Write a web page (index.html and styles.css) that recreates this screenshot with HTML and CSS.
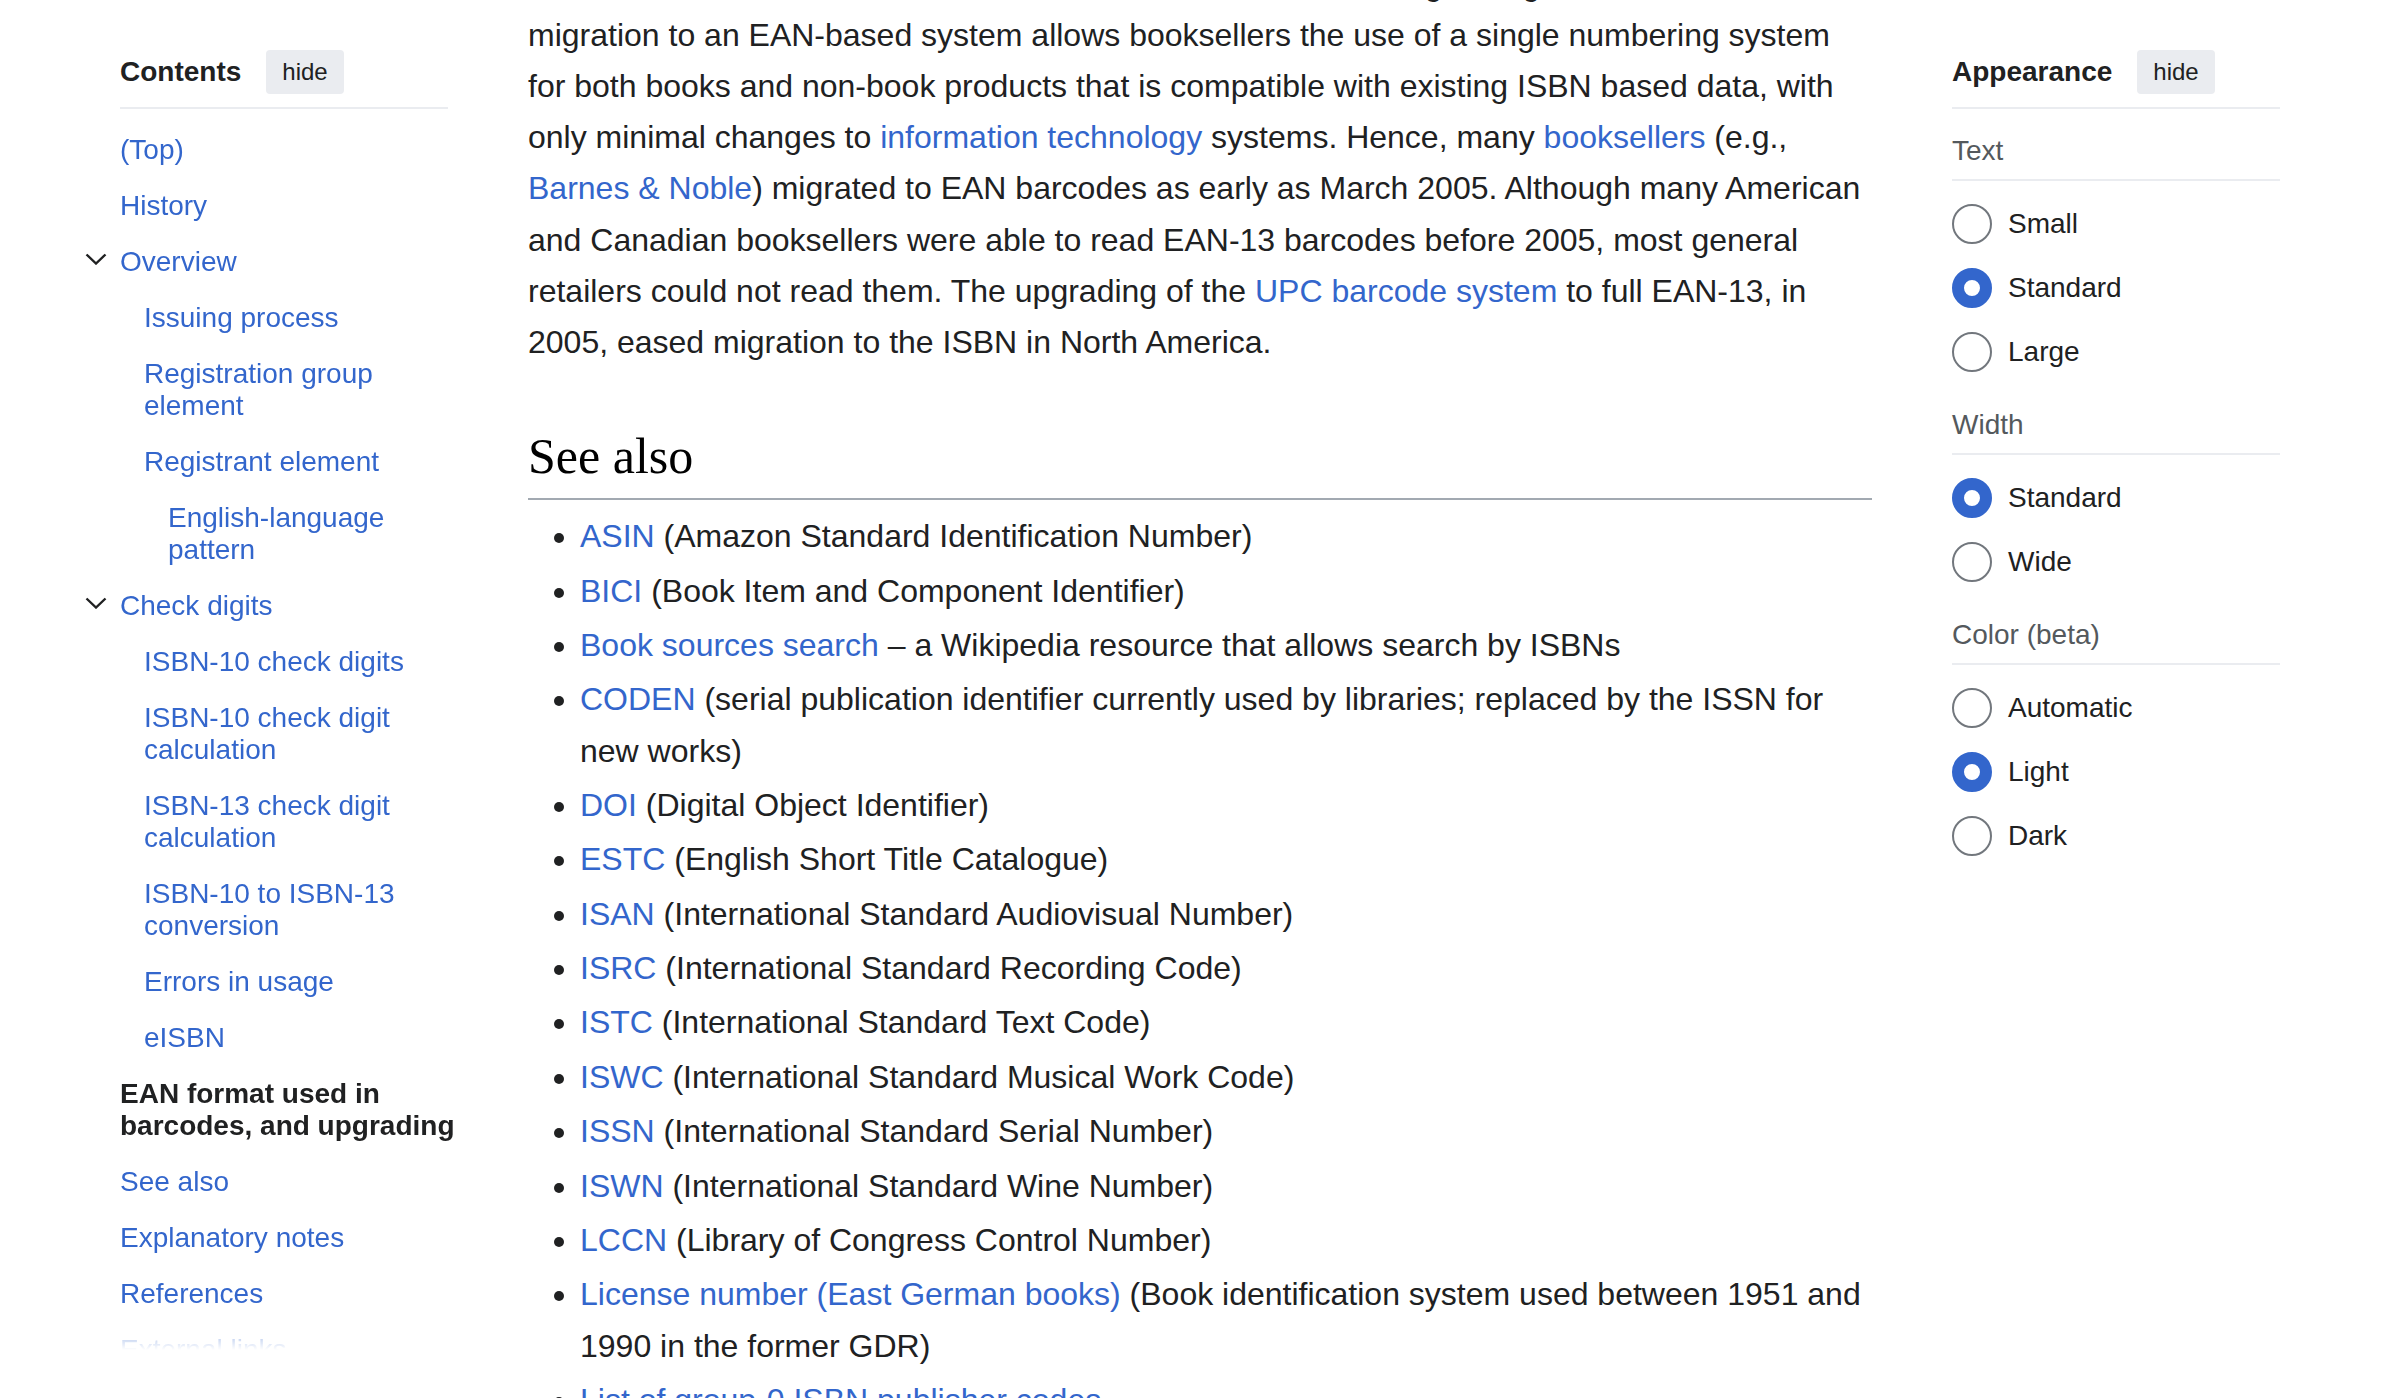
FILE: index.html
```html
<!DOCTYPE html>
<html lang="en">
<head>
<meta charset="utf-8">
<title>International Standard Book Number</title>
<link rel="stylesheet" href="styles.css">
</head>
<body>
<div class="page">
  <nav class="toc" aria-label="Contents">
    <div class="pinned-header">
      <h2 class="pinned-title">Contents</h2>
      <button class="hide-btn" type="button">hide</button>
    </div>
    <ul class="toc-list">
      <li class="toc-item"><a class="toc-link" href="#">(Top)</a></li>
      <li class="toc-item"><a class="toc-link" href="#History">History</a></li>
      <li class="toc-item">
        <div class="toc-row">
          <button class="toc-toggle" type="button" aria-label="Toggle Overview subsection">
            <svg class="chevron" width="22" height="12" viewBox="0 0 22 12"><polyline points="1.5,1.5 11,10.5 20.5,1.5" fill="none" stroke="#202122" stroke-width="2.4"/></svg>
          </button>
          <a class="toc-link" href="#Overview">Overview</a>
        </div>
        <ul class="toc-sub">
          <li><a class="toc-link" href="#Issuing_process">Issuing process</a></li>
          <li><a class="toc-link" href="#Registration_group_element">Registration group element</a></li>
          <li>
            <a class="toc-link" href="#Registrant_element">Registrant element</a>
            <ul class="toc-sub">
              <li><a class="toc-link" href="#English-language_pattern">English-language pattern</a></li>
            </ul>
          </li>
        </ul>
      </li>
      <li class="toc-item">
        <div class="toc-row">
          <button class="toc-toggle" type="button" aria-label="Toggle Check digits subsection">
            <svg class="chevron" width="22" height="12" viewBox="0 0 22 12"><polyline points="1.5,1.5 11,10.5 20.5,1.5" fill="none" stroke="#202122" stroke-width="2.4"/></svg>
          </button>
          <a class="toc-link" href="#Check_digits">Check digits</a>
        </div>
        <ul class="toc-sub">
          <li><a class="toc-link" href="#ISBN-10_check_digits">ISBN-10 check digits</a></li>
          <li><a class="toc-link" href="#ISBN-10_check_digit_calculation">ISBN-10 check digit calculation</a></li>
          <li><a class="toc-link" href="#ISBN-13_check_digit_calculation">ISBN-13 check digit calculation</a></li>
          <li><a class="toc-link" href="#ISBN-10_to_ISBN-13_conversion">ISBN-10 to ISBN-13 conversion</a></li>
          <li><a class="toc-link" href="#Errors_in_usage">Errors in usage</a></li>
          <li><a class="toc-link" href="#eISBN">eISBN</a></li>
        </ul>
      </li>
      <li class="toc-item"><a class="toc-link is-active" href="#EAN_format">EAN format used in barcodes, and upgrading</a></li>
      <li class="toc-item"><a class="toc-link" href="#See_also">See also</a></li>
      <li class="toc-item"><a class="toc-link" href="#Explanatory_notes">Explanatory notes</a></li>
      <li class="toc-item"><a class="toc-link" href="#References">References</a></li>
      <li class="toc-item"><a class="toc-link" href="#External_links">External links</a></li>
    </ul>
  </nav>

  <main class="content">
    <p class="body-text">barcode format is identical to the EAN barcode format of existing 10-digit ISBNs. So,<br>migration to an EAN-based system allows booksellers the use of a single numbering system for both books and non-book products that is compatible with existing ISBN based data, with only minimal changes to <a href="#">information technology</a> systems. Hence, many <a href="#">booksellers</a> (e.g., <a href="#">Barnes &amp; Noble</a>) migrated to EAN barcodes as early as March 2005. Although many American and Canadian booksellers were able to read EAN-13 barcodes before 2005, most general retailers could not read them. The upgrading of the <a href="#">UPC barcode system</a> to full EAN-13, in 2005, eased migration to the ISBN in North America.</p>

    <h2 class="section-heading" id="See_also">See also</h2>
    <ul class="see-also">
      <li><a href="#">ASIN</a> (Amazon Standard Identification Number)</li>
      <li><a href="#">BICI</a> (Book Item and Component Identifier)</li>
      <li><a href="#">Book sources search</a> – a Wikipedia resource that allows search by ISBNs</li>
      <li><a href="#">CODEN</a> (serial publication identifier currently used by libraries; replaced by the ISSN for new works)</li>
      <li><a href="#">DOI</a> (Digital Object Identifier)</li>
      <li><a href="#">ESTC</a> (English Short Title Catalogue)</li>
      <li><a href="#">ISAN</a> (International Standard Audiovisual Number)</li>
      <li><a href="#">ISRC</a> (International Standard Recording Code)</li>
      <li><a href="#">ISTC</a> (International Standard Text Code)</li>
      <li><a href="#">ISWC</a> (International Standard Musical Work Code)</li>
      <li><a href="#">ISSN</a> (International Standard Serial Number)</li>
      <li><a href="#">ISWN</a> (International Standard Wine Number)</li>
      <li><a href="#">LCCN</a> (Library of Congress Control Number)</li>
      <li><a href="#">License number (East German books)</a> (Book identification system used between 1951 and 1990 in the former GDR)</li>
      <li><a href="#">List of group-0 ISBN publisher codes</a></li>
      <li><a href="#">List of group-1 ISBN publisher codes</a></li>
    </ul>
  </main>

  <aside class="appearance" aria-label="Appearance">
    <div class="pinned-header">
      <h2 class="pinned-title">Appearance</h2>
      <button class="hide-btn" type="button">hide</button>
    </div>

    <div class="appearance-section first">
      <div class="section-label">Text</div>
      <div class="radio-group" role="radiogroup">
        <label class="radio-option"><input class="radio" type="radio" name="text-size"> Small</label>
        <label class="radio-option"><input class="radio" type="radio" name="text-size" checked> Standard</label>
        <label class="radio-option"><input class="radio" type="radio" name="text-size"> Large</label>
      </div>
    </div>

    <div class="appearance-section">
      <div class="section-label">Width</div>
      <div class="radio-group" role="radiogroup">
        <label class="radio-option"><input class="radio" type="radio" name="width" checked> Standard</label>
        <label class="radio-option"><input class="radio" type="radio" name="width"> Wide</label>
      </div>
    </div>

    <div class="appearance-section">
      <div class="section-label">Color (beta)</div>
      <div class="radio-group" role="radiogroup">
        <label class="radio-option"><input class="radio" type="radio" name="color"> Automatic</label>
        <label class="radio-option"><input class="radio" type="radio" name="color" checked> Light</label>
        <label class="radio-option"><input class="radio" type="radio" name="color"> Dark</label>
      </div>
    </div>
  </aside>
</div>
</body>
</html>
```

FILE: styles.css
```css
html {
  overflow: hidden;
}

body {
  margin: 0;
  background: #ffffff;
  color: #202122;
  font-family: "Liberation Sans", Arial, Helvetica, sans-serif;
}

a {
  color: #3366cc;
  text-decoration: none;
}

.page {
  display: grid;
  grid-template-columns: 328px 1344px 328px;
  column-gap: 80px;
  padding: 0 120px;
  align-items: start;
}

/* ---------- pinned headers ---------- */
.pinned-header {
  display: flex;
  align-items: center;
  gap: 25px;
  padding-bottom: 13px;
  border-bottom: 2px solid #eaecf0;
}

.pinned-title {
  margin: 0;
  font-size: 28px;
  line-height: 32px;
  font-weight: bold;
  color: #202122;
}

.hide-btn {
  height: 44px;
  padding: 0 16px;
  border: 0;
  border-radius: 4px;
  background: #eaecf0;
  color: #202122;
  font-family: "Liberation Sans", Arial, sans-serif;
  font-size: 24px;
  line-height: 28px;
}

/* ---------- table of contents ---------- */
.toc {
  padding-top: 50px;
  height: 1350px;
  box-sizing: border-box;
  display: flex;
  flex-direction: column;
}

.toc-list {
  flex: 1;
  min-height: 0;
  overflow: hidden;
  list-style: none;
  margin: 13px -20px 0 -40px;
  padding: 0 0 0 40px;
  -webkit-mask-image: linear-gradient(to bottom, #000 calc(100% - 44px), transparent 100%);
  mask-image: linear-gradient(to bottom, #000 calc(100% - 44px), transparent 100%);
}

.toc-sub {
  list-style: none;
  margin: 0;
  padding: 0 0 0 24px;
}

.toc-link {
  display: block;
  padding: 12px 0;
  font-size: 28px;
  line-height: 32px;
  color: #3366cc;
}

.toc-link.is-active {
  color: #202122;
  font-weight: bold;
}

.toc-row {
  display: flex;
  align-items: flex-start;
}

.toc-row .toc-link {
  flex: 1;
}

.toc-toggle {
  flex: none;
  display: flex;
  align-items: center;
  justify-content: center;
  width: 22px;
  height: 32px;
  box-sizing: border-box;
  margin: 12px 13px 0 -35px;
  padding: 0 0 6px;
  border: 0;
  background: none;
}

.chevron {
  display: block;
}

/* ---------- main content ---------- */
.content {
  min-width: 0;
  margin-top: -41.5px;
}

.body-text {
  margin: 0;
  font-size: 32px;
  line-height: 51.2px;
}

.section-heading {
  margin: 55.5px 0 0;
  padding-bottom: 10px;
  border-bottom: 2px solid #a2a9b1;
  font-family: "Liberation Serif", "Times New Roman", serif;
  font-weight: normal;
  font-size: 50px;
  line-height: 64px;
  color: #000000;
}

.see-also {
  margin: 11.5px 0 0;
  padding-left: 52px;
  font-size: 32px;
  line-height: 51.2px;
}

.see-also li {
  margin-bottom: 3.2px;
}

/* ---------- appearance panel ---------- */
.appearance {
  padding-top: 50px;
}

.appearance-section.first {
  margin-top: 25.5px;
}

.section-label {
  font-size: 28px;
  line-height: 32px;
  color: #54595d;
  padding-bottom: 12px;
  border-bottom: 2px solid #eaecf0;
  margin-bottom: 23px;
}

.radio-group {
  display: flex;
  flex-direction: column;
  gap: 24px;
  margin-bottom: 37px;
}

.radio-option {
  display: flex;
  align-items: center;
  gap: 16px;
  font-size: 28px;
  line-height: 32px;
  color: #202122;
}

.radio {
  -webkit-appearance: none;
  appearance: none;
  flex: none;
  width: 40px;
  height: 40px;
  margin: 0;
  box-sizing: border-box;
  border: 2px solid #72777d;
  border-radius: 50%;
  background: #ffffff;
}

.radio:checked {
  border: 12px solid #3366cc;
}
```
